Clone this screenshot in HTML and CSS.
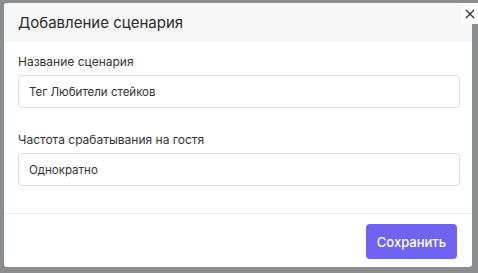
FILE: index.html
```html
<!DOCTYPE html>
<html lang="ru">
<head>
<meta charset="utf-8">
<link rel="stylesheet" href="styles.css">
</head>
<body>
<div class="backdrop">
  <div class="modal">
    <div class="modal-header">
      <h2 class="modal-title">Добавление сценария</h2>
    </div>
    <div class="modal-body">
      <div class="field">
        <label class="field-label">Название сценария</label>
        <div class="field-input">Тег Любители стейков</div>
      </div>
      <div class="field">
        <label class="field-label">Частота срабатывания на гостя</label>
        <div class="field-input">Однократно</div>
      </div>
    </div>
    <div class="modal-footer">
      <button class="btn-primary">Сохранить</button>
    </div>
  </div>
  <button class="close-btn" aria-label="Закрыть">
    <svg width="10" height="10" viewBox="0 0 10 10"><path d="M1 1L9 9M9 1L1 9" stroke="#333" stroke-width="1.4" fill="none"/></svg>
  </button>
</div>
</body>
</html>
```
FILE: styles.css
```css
html, body {
  margin: 0;
  padding: 0;
}
body {
  background: #8b8e91;
  font-family: "Inter", "Noto Sans", sans-serif;
  color: #333;
  width: 478px;
  height: 273px;
  overflow: hidden;
}
.backdrop {
  position: relative;
  width: 478px;
  height: 273px;
  padding: 3px 0 0 4px;
  box-sizing: border-box;
}
.modal {
  width: 468px;
  height: 264px;
  background: #fff;
  border-radius: 3px;
  display: flex;
  flex-direction: column;
  overflow: hidden;
}
.modal-header {
  height: 39px;
  flex: none;
  background: #f7f7f8;
  display: flex;
  align-items: center;
  padding: 0 14px;
}
.modal-title {
  margin: 0;
  font-size: 15px;
  font-weight: 400;
  color: #2b2b2b;
}
.modal-body {
  flex: none;
  padding: 12px 12px 0 14px;
  display: flex;
  flex-direction: column;
  gap: 24px;
  height: 172px;
  box-sizing: border-box;
  border-bottom: 1px solid #efefef;
}
.field {
  display: flex;
  flex-direction: column;
  gap: 6px;
}
.field-label {
  font-size: 12px;
  color: #333;
  line-height: 15px;
}
.field-input {
  height: 33px;
  box-sizing: border-box;
  border: 1px solid #dcdcdc;
  border-radius: 4px;
  padding: 0 10px;
  display: flex;
  align-items: center;
  font-size: 11.5px;
  color: #333;
}
.modal-footer {
  flex: 1;
  display: flex;
  justify-content: flex-end;
  align-items: flex-start;
  padding: 10px 15px 0 0;
}
.btn-primary {
  width: 91px;
  height: 35px;
  border: none;
  border-radius: 4px;
  background: #7063ef;
  color: #fff;
  font-family: inherit;
  font-size: 13px;
  font-weight: 500;
}
.close-btn {
  position: absolute;
  top: 3px;
  right: 0;
  width: 17px;
  height: 21px;
  padding: 0;
  border: none;
  background: #fff;
  display: flex;
  align-items: center;
  justify-content: center;
}
```
